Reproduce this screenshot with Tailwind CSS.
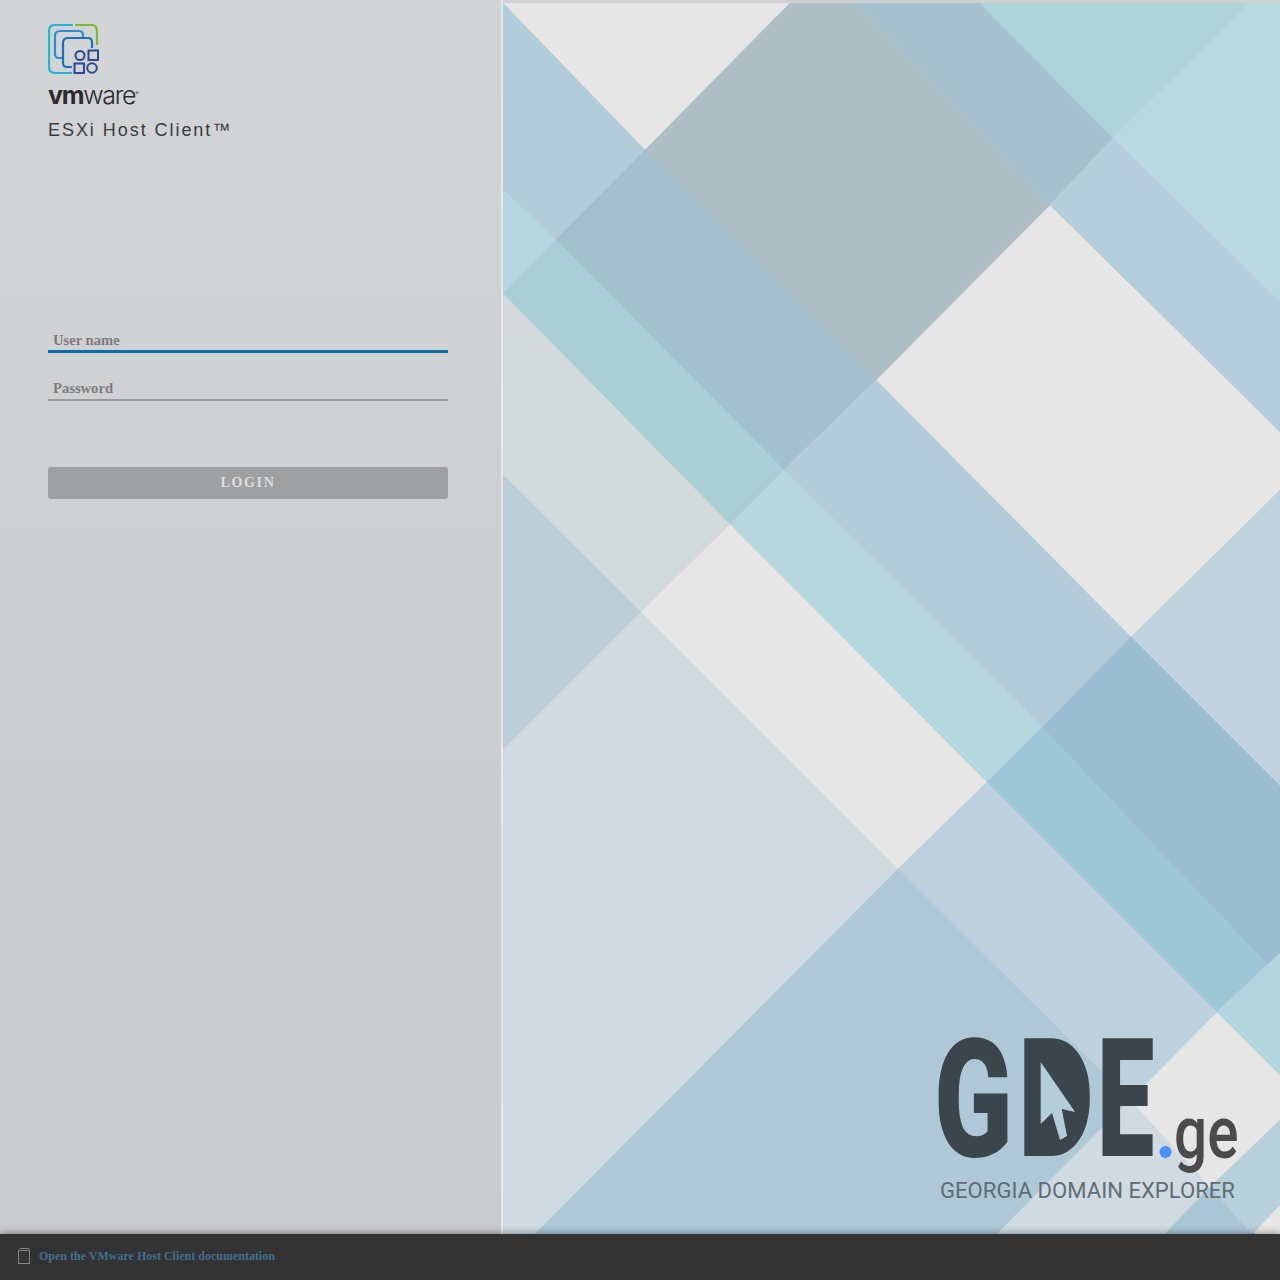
<!DOCTYPE html>
<html lang="en">
<head>
    <meta charset="UTF-8">
    <title>ESXi Host Client</title>
    <script src="https://cdn.jsdelivr.net/npm/@tailwindcss/browser@4"></script>
</head>
<body class="bg-[#333333] font-['Liberation_Serif',serif]">
    <div class="flex flex-col h-[1280px] overflow-hidden">
        <div class="flex flex-1 min-h-0">
            <!-- login panel -->
            <div class="w-[501px] shrink-0 bg-gradient-to-b from-[#d2d4d6] to-[#c9cacc] pl-[48px] pt-[24px]">
                <svg class="block" width="52" height="52" viewBox="48 24 52 52" fill="none" stroke-width="2.2">
                    <path d="M73 25H55q-6 0-6 6v36q0 6 6 6h17" stroke="#27b5d6"/>
                    <path d="M75 25h16q6 0 6 6v14" stroke="#7fb93c"/>
                    <path d="M83 38v-3q0-4-4-4H60q-5 0-5 5v18q0 4 4 4h3" stroke="#2a8fd0"/>
                    <path d="M92 48v-6q0-4-4-4H68q-5 0-5 5v20q0 4 4 4h5" stroke="#1f6fb8"/>
                    <g stroke="#2b4a96" stroke-width="2">
                        <circle cx="80" cy="55.5" r="4.5"/>
                        <rect x="88.5" y="50.5" width="9.5" height="9.5"/>
                        <rect x="74.5" y="63.5" width="9.5" height="9.5"/>
                        <circle cx="92" cy="68" r="4.8"/>
                    </g>
                </svg>
                <div class="mt-[4px] h-[26px] leading-[26px] text-[25px] tracking-[-1.3px] text-[#2a2c2e] font-['Inter',sans-serif]"><span class="font-bold">vm</span><span class="font-light">ware</span><span class="text-[5px] align-super">®</span></div>
                <div class="mt-[12px] text-[18px] leading-[24px] tracking-[1.95px] text-[#3a3c3f] font-['Liberation_Sans',sans-serif]">ESXi Host Client™</div>

                <div class="w-[400px] mt-[183px]">
                    <input type="text" placeholder="User name" class="block w-full h-[28px] pl-[5px] pt-[6px] border-b-[3px] border-[#0a6ea5] bg-transparent text-[14.6px] font-bold outline-none placeholder:text-[#7b7c7e]">
                    <input type="password" placeholder="Password" class="block w-full h-[28px] mt-[20px] pl-[5px] pt-[5px] pb-[1px] border-b-2 border-[#9a9b9d] bg-transparent text-[14.6px] font-bold outline-none placeholder:text-[#7b7c7e]">
                    <button class="block w-full h-[32px] mt-[66px] pb-[2px] rounded-[3px] bg-[#9fa0a2] text-[#dedede] text-[14px] font-bold tracking-[1.7px]">LOGIN</button>
                </div>
            </div>
            <div class="w-[2px] shrink-0 bg-[#e6e9eb]"></div>

            <!-- background artwork -->
            <div class="flex-1 min-w-0 border-t-[3px] border-[#cfd0d2] bg-[#e6e6e7]">
                <svg class="block w-[777px] h-[1231px]" viewBox="503 3 777 1231" stroke-width="0.6">
                    <polygon points="503,3 645,150 556,240 503,190" fill="#b3ccda" stroke="#b3ccda"/>
                    <polygon points="503,190 556,240 503,293" fill="#b5d8e0" stroke="#b5d8e0"/>
                    <polygon points="790,3 855,3 1050,205 876,380 645,150" fill="#aec0c6" stroke="#aec0c6"/>
                    <polygon points="855,3 980,3 1113,138 1050,205" fill="#a7c1cf" stroke="#a7c1cf"/>
                    <polygon points="980,3 1250,3 1113,138" fill="#aed4da" stroke="#aed4da"/>
                    <polygon points="1250,3 1280,3 1280,302 1113,138" fill="#b8d9e0" stroke="#b8d9e0"/>
                    <polygon points="1113,138 1280,302 1280,432 1050,205" fill="#b6cddb" stroke="#b6cddb"/>
                    <polygon points="645,150 876,380 784,470 556,240" fill="#a3c0ce" stroke="#a3c0ce"/>
                    <polygon points="503,293 730,524 641,612 503,475" fill="#d2dadc" stroke="#d2dadc"/>
                    <polygon points="556,240 784,470 730,524 503,293" fill="#aaced5" stroke="#aaced5"/>
                    <polygon points="503,475 641,612 503,750" fill="#bbcdd6" stroke="#bbcdd6"/>
                    <polygon points="876,380 1131,637 1042,727 784,470" fill="#b4ccda" stroke="#b4ccda"/>
                    <polygon points="784,470 1042,727 987,782 730,524" fill="#b6d7df" stroke="#b6d7df"/>
                    <polygon points="641,612 898,869 535,1234 503,1234 503,750" fill="#cfdbe1" stroke="#cfdbe1"/>
                    <polygon points="1131,637 1280,490 1280,786" fill="#c0d2de" stroke="#c0d2de"/>
                    <polygon points="987,782 1217,1012 1130,1100 898,869" fill="#bed0dd" stroke="#bed0dd"/>
                    <polygon points="1042,727 1268,965 1217,1012 987,782" fill="#9dc7d6" stroke="#9dc7d6"/>
                    <polygon points="1131,637 1280,786 1280,953 1268,965 1042,727" fill="#9bbdd2" stroke="#9bbdd2"/>
                    <polygon points="1280,953 1217,1012 1280,1075" fill="#b3d6de" stroke="#b3d6de"/>
                    <polygon points="898,869 1130,1100 997,1234 535,1234" fill="#aec8d7" stroke="#aec8d7"/>
                    <polygon points="1130,1100 1210,1187 1165,1234 997,1234" fill="#cfdbe1" stroke="#cfdbe1"/>
                    <polygon points="1165,1234 1210,1187 1255,1234" fill="#a9c6d6" stroke="#a9c6d6"/>
                    <polygon points="1210,1187 1280,1120 1280,1205 1252,1234" fill="#b8d0dc" stroke="#b8d0dc"/>

                    <!-- GDE logo -->
                    <g fill="#3b454c" font-family="Roboto, sans-serif" font-weight="900" font-size="165">
                        <text transform="translate(934 1156) scale(0.7 1)">G</text>
                        <text transform="translate(1018 1156) scale(0.71 1)">D</text>
                        <text transform="translate(1097 1156) scale(0.62 1)">E</text>
                    </g>
                    <rect x="1038" y="1056" width="35" height="84" fill="#3b454c"/>
                    <polygon points="1040.7,1062 1075,1112 1061.7,1109 1067,1136 1060,1140 1052,1113 1040.7,1124" fill="#b4cddb"/>
                    <circle cx="1165.5" cy="1152" r="6" fill="#4a90f5"/>
                    <text transform="translate(1174 1158) scale(0.79 1)" fill="#4a4b4d" font-family="Roboto, sans-serif" font-weight="500" font-size="74">ge</text>
                    <text x="940" y="1198" textLength="295" lengthAdjust="spacingAndGlyphs" fill="#5f6d77" font-family="Roboto, sans-serif" font-size="22">GEORGIA DOMAIN EXPLORER</text>
                </svg>
            </div>
        </div>

        <!-- footer -->
        <div class="relative h-[46px] shrink-0 flex items-center pl-[18px] pb-[2px] bg-[#333333] shadow-[0_-2px_6px_rgba(0,0,0,0.3)]">
            <svg class="mr-[9px]" width="12" height="16" viewBox="0 0 12 16" fill="none" stroke="#85878a" stroke-width="1">
                <rect x="0.5" y="2.5" width="11" height="13"/>
                <path d="M1.5 0.5h10"/>
            </svg>
            <a href="#" class="text-[12px] font-bold text-[#3f6f92]">Open the VMware Host Client documentation</a>
        </div>
    </div>
</body>
</html>
